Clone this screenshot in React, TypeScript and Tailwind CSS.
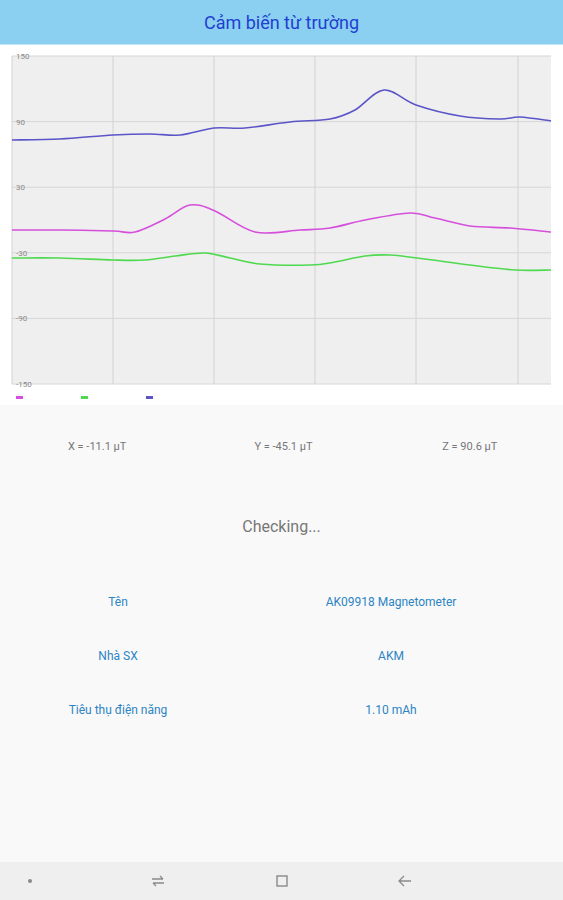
import React from 'react';

type Pt = [number, number];

// chart frame in svg coords (svg starts at page y=45)
const L = 12;
const R = 551;
const T = 11;
const B = 339;

const toY = (v: number) => T + ((150 - v) / 300) * (B - T);

const smooth = (pts: Pt[]) => {
  let d = `M${pts[0][0]},${pts[0][1]}`;
  for (let i = 0; i < pts.length - 1; i++) {
    const p0 = pts[i - 1] || pts[i];
    const p1 = pts[i];
    const p2 = pts[i + 1];
    const p3 = pts[i + 2] || p2;
    const c1x = p1[0] + (p2[0] - p0[0]) / 6;
    const c1y = p1[1] + (p2[1] - p0[1]) / 6;
    const c2x = p2[0] - (p3[0] - p1[0]) / 6;
    const c2y = p2[1] - (p3[1] - p1[1]) / 6;
    d += ` C${c1x},${c1y} ${c2x},${c2y} ${p2[0]},${p2[1]}`;
  }
  return d;
};

const shift = (pts: Pt[]): Pt[] => pts.map(([x, y]) => [x, y - 45]);

const blue = shift([
  [12, 140], [60, 139], [113, 135], [150, 134], [180, 135], [214, 128], [245, 128],
  [290, 122], [330, 119], [355, 110], [384, 90], [416, 105], [460, 116], [500, 119],
  [520, 117], [551, 121],
]);
const magenta = shift([
  [12, 230], [60, 230], [113, 231], [135, 232], [165, 219], [190, 205], [215, 211],
  [255, 232], [300, 230], [330, 228], [365, 220], [410, 213], [435, 218], [470, 226],
  [510, 228], [551, 232],
]);
const green = shift([
  [12, 258], [60, 258], [113, 260], [145, 260], [175, 256], [205, 253], [230, 258],
  [260, 264], [310, 265], [335, 262], [365, 256], [390, 255], [425, 259], [470, 265],
  [515, 270], [551, 270],
]);

const gridX = [113, 214, 315, 416, 518];
const ticks = [150, 90, 30, -30, -90, -150];

const Chart = () => (
  <svg width={563} height={360} className="block">
    <rect x={0} y={0} width={563} height={360} fill="#ffffff" />
    <rect x={L} y={T} width={R - L} height={B - T} fill="#efefef" />
    {gridX.map((x) => (
      <line key={x} x1={x} y1={T} x2={x} y2={B} stroke="#d2d2d2" strokeWidth={1} />
    ))}
    {ticks.map((t) => (
      <line key={t} x1={L} y1={toY(t)} x2={R} y2={toY(t)} stroke="#d6d6d6" strokeWidth={1} />
    ))}
    <line x1={L} y1={T} x2={L} y2={B} stroke="#d2d2d2" strokeWidth={1} />
    {ticks.map((t) => (
      <text
        key={`l${t}`}
        x={16}
        y={toY(t) + 3}
        fontSize={8}
        fill="#8a8a8a"
        fontFamily="Roboto, sans-serif"
      >
        {t}
      </text>
    ))}
    <path d={smooth(blue)} fill="none" stroke="#5b55c8" strokeWidth={1.6} />
    <path d={smooth(magenta)} fill="none" stroke="#d64fdc" strokeWidth={1.6} />
    <path d={smooth(green)} fill="none" stroke="#4fd94f" strokeWidth={1.6} />
    <rect x={16} y={351} width={7} height={3} fill="#d64fdc" />
    <rect x={81} y={351} width={7} height={3} fill="#4fd94f" />
    <rect x={146} y={351} width={7} height={3} fill="#5b55c8" />
  </svg>
);

const InfoRow = ({ label, value }: { label: string; value: string }) => (
  <div className="flex h-[54px] items-center text-[12px] text-[#2c84c4]">
    <div className="w-[236px] text-center">{label}</div>
    <div className="w-[310px] text-center">{value}</div>
  </div>
);

export default function App() {
  return (
    <div
      className="flex h-[900px] w-[563px] flex-col overflow-hidden bg-[#f9f9f9]"
      style={{ fontFamily: 'Roboto, "Noto Sans", sans-serif' }}
    >
      <div className="flex h-[45px] items-center justify-center border-b border-[#c4e6f8] bg-[#8bcff1]">
        <span className="text-[18px] text-[#1f3fd0]">Cảm biến từ trường</span>
      </div>

      <Chart />

      <div className="grid grid-cols-3 pl-[4px] pt-[34px] text-[11px] text-[#777777]">
        <div className="text-center">X = -11.1 μT</div>
        <div className="text-center">Y = -45.1 μT</div>
        <div className="text-center">Z = 90.6 μT</div>
      </div>

      <div className="mt-[59px] text-center text-[16px] text-[#777777]">Checking...</div>

      <div className="mt-[36px] flex flex-col">
        <InfoRow label="Tên" value="AK09918 Magnetometer" />
        <InfoRow label="Nhà SX" value="AKM" />
        <InfoRow label="Tiêu thụ điện năng" value="1.10 mAh" />
      </div>

      <div className="flex-1" />

      <div className="flex h-[38px] items-center bg-[#efefef] text-[#8a8a8a]">
        <div className="flex w-[60px] justify-center">
          <div className="h-[4px] w-[4px] rounded-full bg-[#888888]" />
        </div>
        <div className="ml-[84px] flex w-[28px] justify-center">
          <svg width="16" height="14" viewBox="0 0 16 14" fill="none" stroke="#8a8a8a" strokeWidth="1.3">
            <path d="M2 5h11M10 2l3 3" />
            <path d="M14 9H3M6 12l-3-3" />
          </svg>
        </div>
        <div className="ml-[96px] flex w-[28px] justify-center">
          <svg width="14" height="14" viewBox="0 0 14 14" fill="none" stroke="#8a8a8a" strokeWidth="1.4">
            <rect x="2" y="2" width="10" height="10" />
          </svg>
        </div>
        <div className="ml-[95px] flex w-[28px] justify-center">
          <svg width="16" height="14" viewBox="0 0 16 14" fill="none" stroke="#8a8a8a" strokeWidth="1.3">
            <path d="M14 7H2M7 2L2 7l5 5" />
          </svg>
        </div>
      </div>
    </div>
  );
}
